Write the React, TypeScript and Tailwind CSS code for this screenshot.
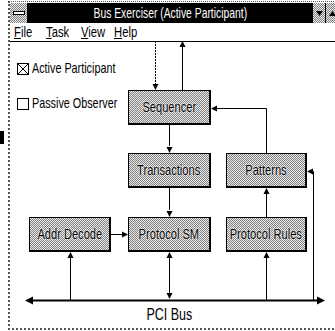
import React from "react";

const font = "font-['Liberation_Sans',Arial,sans-serif]";
const dither =
  "bg-[repeating-conic-gradient(#808080_0%_25%,#ebebeb_0%_50%)] bg-[length:2px_2px]";

function Narrow({ children, w, s = "scale-x-[0.75]" }: { children: React.ReactNode; w?: number; s?: string }) {
  return (
    <span className="inline-block whitespace-nowrap" style={w ? { width: w } : undefined}>
      <span className={`inline-block whitespace-nowrap ${s} origin-left`}>{children}</span>
    </span>
  );
}

function Node({ label, x, y, w, h }: { label: string; x: number; y: number; w: number; h: number }) {
  return (
    <div
      className={`absolute flex items-center justify-center border border-black border-r-2 border-b-2 ${dither} text-[15px] text-black`}
      style={{ left: x, top: y, width: w, height: h }}
    >
      <span className="inline-block whitespace-nowrap scale-x-[0.74] origin-center [text-shadow:0_0_2px_#fff,0_0_2px_#fff]">
        {label}
      </span>
    </div>
  );
}

function Arrow({ x, y, dir, s = 3, l = 6 }: { x: number; y: number; dir: "u" | "d" | "l" | "r"; s?: number; l?: number }) {
  let pts = "";
  if (dir === "d") pts = `${x},${y} ${x - s},${y - l} ${x + s},${y - l}`;
  if (dir === "u") pts = `${x},${y} ${x - s},${y + l} ${x + s},${y + l}`;
  if (dir === "l") pts = `${x},${y} ${x + l},${y - s} ${x + l},${y + s}`;
  if (dir === "r") pts = `${x},${y} ${x - l},${y - s} ${x - l},${y + s}`;
  return <polygon points={pts} fill="#000" />;
}

export default function App() {
  return (
    <div className={`relative w-[335px] h-[331px] bg-white overflow-hidden ${font}`}>
      {/* stray scan mark */}
      <div className="absolute left-0 top-[131px] w-[4px] h-[13px] bg-black" />

      {/* window */}
      <div className="absolute left-[8px] top-[1px] w-[330px] h-[329px] flex flex-col border-l-2 border-t border-b-2 border-dotted border-[#555]">
        {/* title bar */}
        <div className="h-[20px] mt-[1px] flex bg-black">
          <div className={`w-[18px] h-full ${dither} flex items-center justify-center border-r border-black`}>
            <div className="w-[12px] h-[4px] bg-white border border-black" />
          </div>
          <div className="flex-1 flex items-center justify-center text-white text-[15px]">
            <span className="inline-block whitespace-nowrap scale-x-[0.69] origin-center">
              Bus Exerciser (Active Participant)
            </span>
          </div>
          <div className={`w-[13px] h-full ${dither} flex items-center justify-center border-l border-black`}>
            <svg width="7" height="5" viewBox="0 0 7 5"><polygon points="0,0 7,0 3.5,5" fill="#000" /></svg>
          </div>
          <div className={`w-[13px] h-full ${dither} flex items-center justify-center border-l border-black`}>
            <svg width="7" height="5" viewBox="0 0 7 5"><polygon points="0,5 7,5 3.5,0" fill="#000" /></svg>
          </div>
        </div>
        {/* menu bar */}
        <div className="h-[19px] flex items-center pl-[4px] text-[15px] text-black border-b border-black">
          <Narrow w={32}><span className="underline">F</span>ile</Narrow>
          <Narrow w={35}><span className="underline">T</span>ask</Narrow>
          <Narrow w={33}><span className="underline">V</span>iew</Narrow>
          <Narrow><span className="underline">H</span>elp</Narrow>
        </div>
        {/* content */}
        <div className="flex-1 flex flex-col gap-[20px] pt-[19px] pl-[7px] text-[15px] text-black">
          <div className="h-[15px] flex items-center gap-[3px]">
            <svg width="12" height="12" viewBox="0 0 12 12">
              <rect x="0.5" y="0.5" width="11" height="11" fill="#fff" stroke="#000" />
              <path d="M1 1 L11 11 M11 1 L1 11" stroke="#000" strokeWidth="1" />
            </svg>
            <Narrow s="scale-x-[0.72]">Active Participant</Narrow>
          </div>
          <div className="h-[15px] flex items-center gap-[3px]">
            <svg width="12" height="12" viewBox="0 0 12 12">
              <rect x="0.5" y="0.5" width="11" height="11" fill="#fff" stroke="#000" />
            </svg>
            <Narrow s="scale-x-[0.72]">Passive Observer</Narrow>
          </div>
        </div>
      </div>

      {/* diagram connectors */}
      <svg className="absolute left-0 top-0" width="335" height="331" viewBox="0 0 335 331">
        <g stroke="#000" strokeWidth="1" fill="none">
          <path d="M155.5 41 V84" strokeDasharray="2 1" />
          <path d="M182.5 47 V90" />
          <path d="M169.5 125 V146" />
          <path d="M169.5 188 V210" />
          <path d="M111 234.5 H122" />
          <path d="M70.5 258 V300" />
          <path d="M169.5 258 V294" />
          <path d="M266.5 258 V300" />
          <path d="M266.5 194 V218" />
          <path d="M266.5 154 V108.5 H217" />
          <path d="M313.5 300 V171.5 H312" />
        </g>
        <path d="M32 300.5 H318" stroke="#000" strokeWidth="2" />
        <Arrow x={155.5} y={90} dir="d" />
        <Arrow x={182.5} y={41} dir="u" />
        <Arrow x={169.5} y={153} dir="d" />
        <Arrow x={169.5} y={217} dir="d" />
        <Arrow x={128} y={234.5} dir="r" />
        <Arrow x={70.5} y={252} dir="u" />
        <Arrow x={169.5} y={252} dir="u" />
        <Arrow x={169.5} y={299} dir="d" />
        <Arrow x={266.5} y={252} dir="u" />
        <Arrow x={266.5} y={188} dir="u" />
        <Arrow x={211} y={108.5} dir="l" />
        <Arrow x={307} y={171.5} dir="l" />
        <Arrow x={25} y={300.5} dir="l" s={4} l={8} />
        <Arrow x={325} y={300.5} dir="r" s={4} l={8} />
      </svg>

      {/* diagram nodes */}
      <Node label="Sequencer" x={128} y={90} w={83} h={35} />
      <Node label="Transactions" x={128} y={153} w={83} h={35} />
      <Node label="Patterns" x={226} y={153} w={81} h={35} />
      <Node label="Addr Decode" x={29} y={217} w={82} h={35} />
      <Node label="Protocol SM" x={128} y={217} w={83} h={35} />
      <Node label="Protocol Rules" x={226} y={217} w={81} h={35} />

      <div className="absolute left-0 top-[303px] w-[335px] flex justify-center pl-[4px] text-[16px] text-black">
        <span className="inline-block scale-x-[0.78] origin-center">PCI Bus</span>
      </div>
    </div>
  );
}
